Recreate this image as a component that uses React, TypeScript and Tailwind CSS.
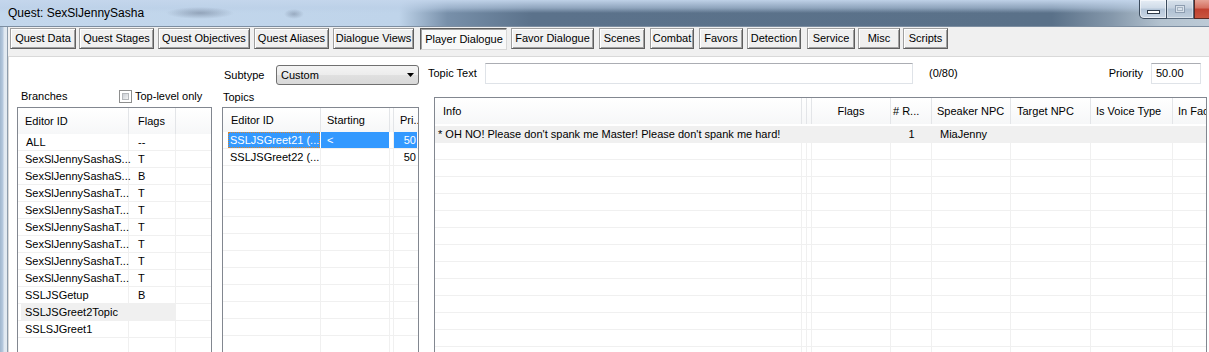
import React from "react";

const tabs: { label: string; cls: string; active?: boolean }[] = [
  { label: "Quest Data", cls: "ml-[2px] w-[66px]" },
  { label: "Quest Stages", cls: "ml-[3px] w-[75px]" },
  { label: "Quest Objectives", cls: "ml-[4px] w-[92px]" },
  { label: "Quest Aliases", cls: "ml-[4px] w-[75px]" },
  { label: "Dialogue Views", cls: "ml-[4px] w-[81px]" },
  { label: "Player Dialogue", cls: "ml-[6px] w-[87px]", active: true },
  { label: "Favor Dialogue", cls: "ml-[4px] w-[83px]" },
  { label: "Scenes", cls: "ml-[5px] w-[46px]" },
  { label: "Combat", cls: "ml-[5px] w-[44px]" },
  { label: "Favors", cls: "ml-[5px] w-[44px]" },
  { label: "Detection", cls: "ml-[4px] w-[54px]" },
  { label: "Service", cls: "ml-[6px] w-[48px]" },
  { label: "Misc", cls: "ml-[3px] w-[42px]" },
  { label: "Scripts", cls: "ml-[3px] w-[45px]" },
];

const branches: { id: string; flag: string; hover?: boolean; indent?: boolean }[] = [
  { id: "ALL", flag: "--", indent: true },
  { id: "SexSlJennySashaS...", flag: "T" },
  { id: "SexSlJennySashaS...", flag: "B" },
  { id: "SexSlJennySashaT...", flag: "T" },
  { id: "SexSlJennySashaT...", flag: "T" },
  { id: "SexSlJennySashaT...", flag: "T" },
  { id: "SexSlJennySashaT...", flag: "T" },
  { id: "SexSlJennySashaT...", flag: "T" },
  { id: "SexSlJennySashaT...", flag: "T" },
  { id: "SSLJSGetup", flag: "B" },
  { id: "SSLJSGreet2Topic", flag: "", hover: true },
  { id: "SSLSJGreet1", flag: "" },
  { id: "", flag: "" },
  { id: "", flag: "" },
];

function Tab({ label, cls, active }: { label: string; cls: string; active?: boolean }) {
  if (active) {
    return (
      <div
        className={`${cls} h-[22px] flex items-center justify-center pt-[1px] pl-[1px] border border-t-[#5f5f5f] border-l-[#5f5f5f] border-r-[#d8d8d8] border-b-[#d8d8d8] bg-[#f9f9f9] shadow-[inset_1px_1px_0_#a0a0a0] whitespace-nowrap`}
      >
        {label}
      </div>
    );
  }
  return (
    <div
      className={`${cls} h-[21px] flex items-center justify-center border border-t-[#a0a0a0] border-l-[#a0a0a0] border-r-[#5f5f5f] border-b-[#5f5f5f] bg-[#f0f0f0] shadow-[inset_1px_1px_0_#ffffff,inset_-1px_-1px_0_#a0a0a0] whitespace-nowrap`}
    >
      {label}
    </div>
  );
}

function TitleBar() {
  return (
    <div className="h-[27px] flex items-start border-b border-[#7d8ea1] bg-[image:radial-gradient(ellipse_34px_6px_at_200px_13px,rgba(60,72,95,0.35),rgba(60,72,95,0)),radial-gradient(ellipse_10px_5px_at_294px_14px,rgba(60,72,95,0.3),rgba(60,72,95,0)),linear-gradient(to_bottom,rgba(196,214,236,0.95)_0px,rgba(186,206,230,0.55)_8px,rgba(186,206,230,0)_13px),linear-gradient(to_right,#c3d7ec_0%,#bfd4ea_33%,#7890aa_37%,#5b728b_44%,#5a7189_87%,#8598ab_92%,#b3c2cf_96%,#bccad6_100%)]">
      <div className="pl-[8px] pt-[6px] text-[12px] leading-[15px] text-black whitespace-nowrap">
        Quest: SexSlJennySasha
      </div>
      <div className="ml-auto flex items-start">
        <div className="w-[28px] h-[19px] rounded-bl-[5px] border border-t-0 border-[#3b4b5d] bg-[linear-gradient(to_bottom,#e6edf5_0%,#cfdbe8_45%,#b4c5d8_50%,#cad7e5_100%)] shadow-[inset_0_0_0_1px_rgba(255,255,255,0.55)] flex items-end justify-center pb-[4px]">
          <div className="w-[13px] h-[4px] bg-white border border-[#2e3a48]" />
        </div>
        <div className="w-[27px] h-[19px] border border-t-0 border-l-0 border-[#56677a] bg-[linear-gradient(to_bottom,#d8e2ec_0%,#c3d0de_45%,#aebfd1_50%,#c0cedc_100%)] shadow-[inset_0_0_0_1px_rgba(255,255,255,0.4)] flex items-center justify-center">
          <div className="w-[10px] h-[8px] border border-[#8d9db0] bg-[#d8e1ea] flex items-center justify-center">
            <div className="w-[6px] h-[4px] border border-[#a5b3c2]" />
          </div>
        </div>
        <div className="w-[15px] h-[19px] border-b border-l border-[#5a2a24] bg-[linear-gradient(to_bottom,#e5a295_0%,#d46f5f_45%,#c0402f_50%,#c8553f_100%)]" />
      </div>
    </div>
  );
}

function Checkbox() {
  return (
    <div className="w-[13px] h-[13px] border border-[#8e8f8f] bg-white p-[2px]">
      <div className="w-full h-full border border-[#b5b8bc] bg-[linear-gradient(135deg,#cbcfd5_0%,#e2e4e7_60%,#f6f6f6_100%)]" />
    </div>
  );
}

function BranchesList() {
  return (
    <div className="mt-[4px] w-[195px] h-[250px] border border-[#828790] bg-white overflow-hidden">
      <div className="flex h-[26px] bg-[linear-gradient(to_bottom,#ffffff,#f6f7f8)]">
        <div className="w-[111px] border-r border-[#e3e5e8] pl-[7px] flex items-center">Editor ID</div>
        <div className="w-[47px] border-r border-[#e3e5e8] pl-[9px] flex items-center">Flags</div>
        <div className="flex-1" />
      </div>
      {branches.map((b, i) => (
        <div key={i} className="flex h-[17px] border-b border-[#f0f0f0]">
          <div className="w-[111px] border-r border-[#f0f0f0] flex">
            {b.hover ? (
              <div className="ml-[3px] flex-1 bg-[#f0f0f0] pl-[4px] flex items-center whitespace-nowrap">{b.id}</div>
            ) : (
              <div className={`${b.indent ? "pl-[8px]" : "pl-[7px]"} flex items-center whitespace-nowrap`}>{b.id}</div>
            )}
          </div>
          <div className={`w-[47px] border-r border-[#f0f0f0] pl-[9px] flex items-center ${b.hover ? "bg-[#f0f0f0]" : ""}`}>
            {b.flag}
          </div>
          <div className="flex-1" />
        </div>
      ))}
    </div>
  );
}

function TopicsList() {
  const empty = Array.from({ length: 12 });
  return (
    <div className="mt-[3px] w-[197px] h-[250px] border border-[#828790] bg-white overflow-hidden">
      <div className="flex h-[24px] bg-[linear-gradient(to_bottom,#ffffff,#f6f7f8)]">
        <div className="w-[98px] border-r border-[#e3e5e8] pl-[8px] flex items-center">Editor ID</div>
        <div className="w-[69px] border-r border-[#e3e5e8] pl-[6px] flex items-center">Starting</div>
        <div className="w-[4px] border-r border-[#e3e5e8]" />
        <div className="w-[24px] pl-[6px] flex items-center whitespace-nowrap overflow-hidden">Pri..</div>
      </div>
      <div className="flex h-[17px] border-b border-[#f0f0f0] text-white">
        <div className="w-[98px] border-r border-white flex">
          <div className="ml-[5px] flex-1 bg-[#3399ff] pl-[2px] flex items-center whitespace-nowrap outline-1 outline-dotted outline-[#d9842e] -outline-offset-1">
            SSLJSGreet21 (...
          </div>
        </div>
        <div className="w-[69px] border-r border-white bg-[#3399ff] pl-[6px] flex items-center">&lt;</div>
        <div className="w-[4px] border-r border-[#f0f0f0]" />
        <div className="w-[23px] bg-[#3399ff] flex items-center justify-end pr-[1px]">50</div>
      </div>
      <div className="flex h-[17px] border-b border-[#f0f0f0]">
        <div className="w-[98px] border-r border-[#f0f0f0] pl-[7px] flex items-center whitespace-nowrap">SSLJSGreet22 (...</div>
        <div className="w-[69px] border-r border-[#f0f0f0]" />
        <div className="w-[4px] border-r border-[#f0f0f0]" />
        <div className="w-[23px] flex items-center justify-end pr-[1px]">50</div>
      </div>
      {empty.map((_, i) => (
        <div key={i} className="flex h-[17px] border-b border-[#f0f0f0]">
          <div className="w-[98px] border-r border-[#f0f0f0]" />
          <div className="w-[69px] border-r border-[#f0f0f0]" />
          <div className="w-[4px] border-r border-[#f0f0f0]" />
          <div className="w-[23px]" />
        </div>
      ))}
    </div>
  );
}

function InfoList() {
  const empty = Array.from({ length: 13 });
  return (
    <div className="ml-[15px] mt-[13px] w-[773px] h-[260px] border border-[#828790] bg-white overflow-hidden">
      <div className="flex h-[26px] bg-[linear-gradient(to_bottom,#ffffff,#f6f7f8)] whitespace-nowrap">
        <div className="w-[367px] border-r border-[#e3e5e8] pl-[8px] flex items-center">Info</div>
        <div className="w-[5px] border-r border-[#e3e5e8]" />
        <div className="w-[5px] border-r border-[#e3e5e8]" />
        <div className="w-[79px] border-r border-[#e3e5e8] flex items-center justify-center">Flags</div>
        <div className="w-[41px] border-r border-[#e3e5e8] pl-[2px] flex items-center">#&nbsp;R...</div>
        <div className="w-[79px] border-r border-[#e3e5e8] pl-[5px] flex items-center">Speaker NPC</div>
        <div className="w-[80px] border-r border-[#e3e5e8] pl-[6px] flex items-center">Target NPC</div>
        <div className="w-[82px] border-r border-[#e3e5e8] pl-[5px] flex items-center">Is Voice Type</div>
        <div className="flex-1 pl-[5px] flex items-center overflow-hidden">In Fac</div>
      </div>
      <div className="h-[2px]" />
      <div className="flex h-[17px] border-b border-[#f0f0f0] bg-[#f0f0f0] whitespace-nowrap">
        <div className="w-[367px] pl-[3px] flex items-center">* OH NO! Please don't spank me Master! Please don't spank me hard!</div>
        <div className="w-[5px]" />
        <div className="w-[5px]" />
        <div className="w-[79px]" />
        <div className="w-[41px] flex items-center justify-center">1</div>
        <div className="w-[79px] pl-[8px] flex items-center">MiaJenny</div>
        <div className="w-[80px]" />
        <div className="w-[82px]" />
        <div className="flex-1" />
      </div>
      {empty.map((_, i) => (
        <div key={i} className="flex h-[17px] border-b border-[#f0f0f0]">
          <div className="w-[367px] border-r border-[#f0f0f0]" />
          <div className="w-[5px] border-r border-[#f0f0f0]" />
          <div className="w-[5px] border-r border-[#f0f0f0]" />
          <div className="w-[79px] border-r border-[#f0f0f0]" />
          <div className="w-[41px] border-r border-[#f0f0f0]" />
          <div className="w-[79px] border-r border-[#f0f0f0]" />
          <div className="w-[80px] border-r border-[#f0f0f0]" />
          <div className="w-[82px] border-r border-[#f0f0f0]" />
          <div className="flex-1" />
        </div>
      ))}
    </div>
  );
}

export default function App() {
  return (
    <div className="w-[1209px] h-[352px] overflow-hidden flex flex-col bg-[#f0f0f0] text-black font-['Liberation_Sans',Arial,sans-serif] text-[11px] leading-[13px]">
      <TitleBar />
      <div className="flex flex-1 min-h-0">
        <div className="w-[8px] shrink-0 bg-[linear-gradient(to_right,#9fb6cd_0px,#b7cadf_3px,#dfe8f1_4px,#e4ebf2_7px,#8d9cab_7px,#8d9cab_8px)]" />
        <div className="flex-1 flex flex-col min-w-0">
          <div className="flex items-start pt-[1px] h-[29px]">
            {tabs.map((t) => (
              <Tab key={t.label} {...t} />
            ))}
          </div>
          <div className="flex-1 flex items-start bg-white border-l border-t border-[#d9d9d9] min-h-0 overflow-hidden">
            {/* Column A: Branches */}
            <div className="ml-[8px] w-[195px] flex flex-col">
              <div className="mt-[32px] h-[14px] flex items-center">
                <div className="pl-[4px] w-[102px]">Branches</div>
                <Checkbox />
                <div className="ml-[3px] whitespace-nowrap">Top-level only</div>
              </div>
              <BranchesList />
            </div>
            {/* Column B: Subtype / Topics */}
            <div className="ml-[10px] w-[197px] flex flex-col">
              <div className="mt-[8px] h-[20px] flex items-center">
                <div className="pl-[2px] w-[54px]">Subtype</div>
                <div className="w-[143px] h-[20px] rounded-[3px] border border-[#707070] bg-[linear-gradient(to_bottom,#f4f4f4_0%,#ececec_50%,#e0e0e0_51%,#d9d9d9_100%)] flex items-center pl-[4px]">
                  <span>Custom</span>
                  <svg className="ml-auto mr-[4px]" width="7" height="4" viewBox="0 0 7 4">
                    <path d="M0 0 H7 L3.5 4 Z" fill="#000" />
                  </svg>
                </div>
              </div>
              <div className="mt-[5px] h-[14px] pl-[1px] flex items-center">Topics</div>
              <TopicsList />
            </div>
            {/* Column C: Topic text / Info */}
            <div className="flex-1 flex flex-col">
              <div className="mt-[6px] h-[21px] flex items-center">
                <div className="ml-[9px] w-[57px] whitespace-nowrap">Topic Text</div>
                <div className="w-[428px] h-[21px] bg-white border border-[#dfe3e8] border-t-[#abadb3]" />
                <div className="ml-[16px]">(0/80)</div>
                <div className="ml-auto">Priority</div>
                <div className="ml-[8px] mr-[8px] w-[50px] h-[21px] bg-white border border-[#dfe3e8] border-t-[#abadb3] flex items-center pl-[4px]">
                  50.00
                </div>
              </div>
              <InfoList />
            </div>
          </div>
        </div>
      </div>
    </div>
  );
}
